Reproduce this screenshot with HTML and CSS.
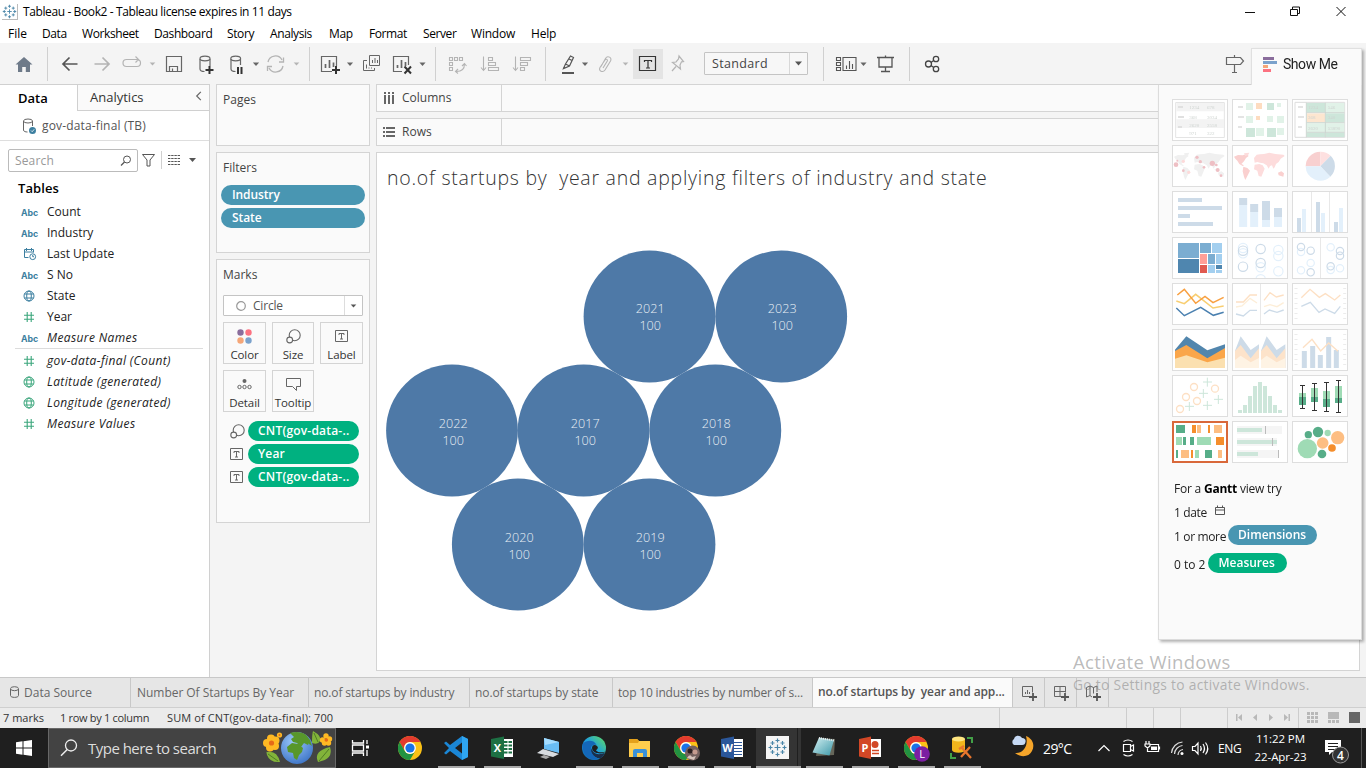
FILE: index.html
```html
<!DOCTYPE html>
<html lang="en">
<head>
<meta charset="utf-8">
<title>Tableau - Book2</title>
<link rel="stylesheet" href="styles.css">
</head>
<body>
<svg width="0" height="0" class="defs">
  <defs>
    <symbol id="caret" viewBox="0 0 8 5"><path d="M0.5 0.5h7L4 4.5z"/></symbol>
    <symbol id="hash" viewBox="0 0 12 12"><path d="M4.2 1v10M8.2 1v10M1 4.2h10M1 8.2h10" fill="none" stroke="currentColor" stroke-width="1.1"/></symbol>
    <symbol id="globe" viewBox="0 0 12 12"><g fill="none" stroke="currentColor"><circle cx="6" cy="6" r="5"/><ellipse cx="6" cy="6" rx="2.3" ry="5"/><path d="M1.5 4h9M1.5 8h9"/></g></symbol>
    <symbol id="tbox" viewBox="0 0 13 12"><path d="M.5 .5h12v11H.5zM4 5V3.5h5V5M6.500 3.500v5.500M5 9h3" fill="none" stroke="#666"/></symbol>
    <symbol id="size" viewBox="0 0 15 15"><g fill="#fafafa" stroke="#666" stroke-width="1.100"><circle cx="8.700" cy="6.300" r="5.500"/><circle cx="3.700" cy="11" r="2.900"/></g></symbol>
    <symbol id="chrome" viewBox="0 0 24 24"><circle cx="12" cy="12" r="12" fill="#fbc116"/><path d="M1.600 6A12 12 0 0 1 22.400 6H12a6 6 0 0 0-5.200 9z" fill="#e33b2e"/><path d="M1.600 6A12 12 0 0 0 12 24l5.200-9a6 6 0 0 1-10.400 0z" fill="#229342"/><circle cx="12" cy="12" r="5.900" fill="#fff"/><circle cx="12" cy="12" r="4.600" fill="#1a73e8"/></symbol>
    <symbol id="tableau" viewBox="0 0 20 20"><path d="M10 7v6M7 10h6M10 1v4M8 3h4M10 15v4M8 17h4M1 10h4M3 8v4M15 10h4M17 8v4M5 3.500v4M3 5.500h4M15 3.500v4M13 5.500h4M5 12.500v4M3 14.500h4M15 12.500v4M13 14.500h4" fill="none" stroke="#4b86a8" stroke-width="1.200"/></symbol>
  </defs>
</svg>
<div class="app">
  <header class="titlebar">
    <svg class="logo" width="16" height="16" viewBox="0 0 20 20"><use href="#tableau"/></svg>
    <span class="title">Tableau - Book2 - Tableau license expires in 11 days</span>
    <svg class="window-buttons" width="126" height="22" viewBox="1230 0 126 22"><path d="M1245 11.500h10M1290.500 8.500h7v6h-7zM1292.500 8v-2h7v6.500h-2M1336.500 6l9 9M1345.500 6l-9 9" fill="none" stroke="#111"/></svg>
  </header>
  <nav class="menu">
    <span class="m1">File</span><span class="m2">Data</span><span class="m3">Worksheet</span><span class="m4">Dashboard</span><span class="m5">Story</span><span class="m6">Analysis</span><span class="m7">Map</span><span class="m8">Format</span><span class="m9">Server</span><span class="m10">Window</span><span class="m11">Help</span>
  </nav>

  <div class="toolbar">
    <svg width="704" height="40" viewBox="0 43 704 40">
      <path d="M15.500 64.500L24 57l8.500 7.500H30V72h-4.200v-5h-3.600v5H18v-7.500z" fill="#6e7a89"/>
      <path d="M47.500 47v34M309.500 47v34M435.500 47v34M545.500 47v34" stroke="#d0d0d0"/>
      <path d="M77.500 64H63M69.500 57.500L63 64l6.500 6.500" fill="none" stroke="#555" stroke-width="1.700"/>
      <path d="M94.500 64H109M102.500 57.500L109 64l-6.500 6.500" fill="none" stroke="#b4b4b4" stroke-width="1.700"/>
      <path d="M130 59.500h-3.500a3.500 3.500 0 0 0 0 7h10.500a3.500 3.500 0 0 0 0-7h-2M127 59.500h11M135.500 56.500l3 3-3 3" fill="none" stroke="#b4b4b4" stroke-width="1.200"/>
      <g fill="none" stroke="#666" stroke-width="1.200">
        <path d="M166.500 56.500h15v15h-15zM169.500 71.500v-5h8v5M172.500 71.500v-3"/>
        <path d="M200 59v10c0 1.600 2 2.500 4.500 2.500M210 59v7"/><ellipse cx="205" cy="58.500" rx="5" ry="2.300"/>
        <path d="M231 59v10c0 1.600 2 2.500 4.500 2.500M240.500 59v6"/><ellipse cx="235.700" cy="58.500" rx="4.900" ry="2.300"/>
      </g>
      <path d="M209.500 66v8M205.500 70h8M238 67v7M241.500 67v7" stroke="#333" stroke-width="2"/>
      <g fill="none" stroke="#b4b4b4" stroke-width="1.300"><path d="M268 62a7.500 7.500 0 0 1 14-2M283 66a7.500 7.500 0 0 1-14 2M279 62h4.500v-4.500M272 66.500h-4.500V71"/></g>
      <g fill="#666"><use href="#caret" x="252" y="62" width="8" height="4.500"/><use href="#caret" x="346.500" y="62" width="7" height="4.500"/><use href="#caret" x="419" y="62" width="7" height="4.500"/><use href="#caret" x="581.500" y="62" width="7" height="4.500"/></g>
      <g fill="#b4b4b4"><use href="#caret" x="149" y="62" width="7" height="4"/><use href="#caret" x="293" y="62" width="7" height="4"/><use href="#caret" x="622" y="62" width="7" height="4"/></g>
      <path d="M332 71.500h-10.500v-15h15V66M402 71.500h-8.500v-15h15V65" fill="none" stroke="#666" stroke-width="1.200"/>
      <path d="M325.500 68v-4M329.500 68v-8M333.500 67v-4.500M397.500 68v-3M401.500 68v-8M405.500 66v-4" stroke="#666" stroke-width="1.700"/>
      <path d="M336 66v8M332 70h8" stroke="#333" stroke-width="2"/><path d="M404.500 66.500l6.500 7M411 66.500l-6.500 7" stroke="#333" stroke-width="2"/>
      <g fill="none" stroke="#666"><path d="M369.500 55.500h10v10h-10zM367 60.500h-3.500v10h11V68M372.500 63v-3M375 63v-5M377.500 63v-3M366.500 68.500v-4M369 68.500v-1M371.500 68.500v-1"/></g>
      <g fill="none" stroke="#b4b4b4" stroke-width="1.100"><path d="M449.500 57.500h3v3h-3zM454.500 57.500h3v3h-3zM459.500 57.500h3v3h-3zM449.500 62.500h3v3h-3zM449.500 67.500h3v3h-3zM464.500 64c0 5-3 7.500-8 7.500M462 66l2.500-2.500 2 2.500M458 69l-2.500 2.500 2.500 2"/>
      <path d="M483.500 56.500V70M481 67.500l2.500 3 2.500-3M488.500 57.500h4v3h-4zM488.500 62.500h7v3h-7zM488.500 67.500h10v3h-10zM515.500 56.500V70M513 67.500l2.500 3 2.500-3M520.500 57.500h10v3h-10zM520.500 62.500h7v3h-7zM520.500 67.500h4v3h-4z"/></g>
      <path d="M563.500 68.500l2-4.500 5-8 3 1.500-4 8.500zM565.500 64l4 2M569 59l3 1.500" fill="none" stroke="#555" stroke-width="1.200"/><path d="M562 73h12" stroke="#555" stroke-width="2"/>
      <path d="M601 66.500l4.500-8c2-3.500 7-1 5 2.500l-5.500 9c-2 3-7 1-5-2.500l5-7.500c1-1.500 3-.5 2.300 1l-4.300 7" fill="none" stroke="#b4b4b4" stroke-width="1.100"/>
      <rect x="633" y="49" width="30" height="30" fill="#e4e4e4"/>
      <path d="M639.500 56.500h16v14h-16zM644.500 62v-1.500h7V62M648 60.500v7.500M646 68h4" fill="none" stroke="#333" stroke-width="1.200"/>
      <path d="M679 56l4.500 5.500-2 .3-1.500 3.200.5 4-8-6.500 3.500-.5 2.500-3zM676 66.500l-4 4.500" fill="none" stroke="#b4b4b4" stroke-width="1.200"/>
    </svg>
    <div class="fit"><span>Standard</span><i><svg width="9" height="5"><use href="#caret" width="9" height="5"/></svg></i></div>
    <svg width="444" height="40" viewBox="807 43 444 40">
      <path d="M823.500 47v34M909.500 47v34" stroke="#d0d0d0"/>
      <g fill="none" stroke="#555" stroke-width="1.100"><path d="M836.500 57.500h4v3h-4zM836.500 62.500h4v3h-4zM836.500 67.500h4v3h-4zM843 57.500h13v13h-13zM846.500 69v-3.500M849.500 69v-8M852.500 69v-5"/></g>
      <use href="#caret" x="860" y="62" width="7" height="4.500" fill="#666"/>
      <path d="M877 57.500h17M879 58v9h13v-9M885.500 55.500v2M885.500 67v4M881 71.500h9" fill="none" stroke="#555" stroke-width="1.300"/>
      <g fill="none" stroke="#444" stroke-width="1.300"><circle cx="928.500" cy="64" r="3"/><circle cx="936" cy="59" r="2.700"/><circle cx="936" cy="69" r="2.700"/><path d="M931 62.500l2.700-2M931 65.500l2.700 2"/></g>
      <path d="M1226.500 57.500h14l3 3.500-3 3.500h-14zM1234.500 55v2.500M1234.500 65v7.500M1232 72.500h5" fill="none" stroke="#666" stroke-width="1.200"/>
    </svg>
  </div>

  <main class="work">
    <aside class="data-pane">
      <div class="pane-tabs"><b>Data</b><span class="an">Analytics</span><svg width="8" height="12" viewBox="0 0 8 12"><path d="M6 1L1.500 5.500 6 10" fill="none" stroke="#666" stroke-width="1.300"/></svg></div>
      <div class="source">
        <svg width="15" height="16" viewBox="22 117 15 16"><path d="M23.500 120v9c0 1.500 2 2 4 2M32.500 120v5" fill="none" stroke="#666"/><ellipse cx="28" cy="120" rx="4.500" ry="2" fill="none" stroke="#666"/><circle cx="32.500" cy="129.500" r="3.500" fill="#3c7fa0"/><path d="M31 129.500l1.200 1.200 2-2.400" fill="none" stroke="#fff" stroke-width=".8"/></svg>
        <span>gov-data-final (TB)</span>
      </div>
      <div class="search-row">
        <div class="search"><span>Search</span><svg width="12" height="12" viewBox="0 0 12 12"><circle cx="7" cy="4.500" r="3.500" fill="none" stroke="#555"/><path d="M4.500 7L1 10.500" stroke="#555" stroke-width="1.200"/></svg></div>
        <svg width="60" height="20" viewBox="141 151 60 20"><path d="M142.500 154.500h12l-4.500 5.500v6h-3v-6z" fill="none" stroke="#555"/><path d="M161.500 151v18" stroke="#d0d0d0"/><path d="M168 155.500h12M168 158.500h12M168 161.500h12M168 164.500h12" stroke="#555" stroke-dasharray="2.400 .8"/><path d="M189 158h7l-3.500 4z" fill="#555"/></svg>
      </div>
      <h3>Tables</h3>
      <ul class="fields">
        <li><i class="abc">Abc</i><span>Count</span></li>
        <li><i class="abc">Abc</i><span>Industry</span></li>
        <li><i class="ico"><svg width="14" height="14" viewBox="0 0 14 14" fill="none" stroke="currentColor"><path d="M5.500 10.500h-4v-8h9v3M1.500 5h9M3.500 1v3M8.500 1v3"/><circle cx="9.700" cy="9.700" r="2.900"/><path d="M9.700 8v1.700h1.300"/></svg></i><span>Last Update</span></li>
        <li><i class="abc">Abc</i><span>S No</span></li>
        <li><i class="ico"><svg width="12" height="12"><use href="#globe"/></svg></i><span>State</span></li>
        <li class="g"><i class="ico"><svg width="12" height="12"><use href="#hash"/></svg></i><span>Year</span></li>
        <li><i class="abc">Abc</i><em>Measure Names</em></li>
      </ul>
      <ul class="fields measures">
        <li class="g"><i class="ico"><svg width="12" height="12"><use href="#hash"/></svg></i><em>gov-data-final (Count)</em></li>
        <li class="g"><i class="ico"><svg width="12" height="12"><use href="#globe"/></svg></i><em>Latitude (generated)</em></li>
        <li class="g"><i class="ico"><svg width="12" height="12"><use href="#globe"/></svg></i><em>Longitude (generated)</em></li>
        <li class="g"><i class="ico"><svg width="12" height="12"><use href="#hash"/></svg></i><em>Measure Values</em></li>
      </ul>
    </aside>

    <section class="cards">
      <div class="card pages"><h4>Pages</h4></div>
      <div class="card filters"><h4>Filters</h4><div class="pill blue">Industry</div><div class="pill blue">State</div></div>
      <div class="card marks"><h4>Marks</h4>
        <div class="mark-type"><svg width="10" height="10"><circle cx="5" cy="5" r="4.300" fill="none" stroke="#999" stroke-width="1.200"/></svg><span>Circle</span><i><svg width="7" height="4"><use href="#caret" width="7" height="4"/></svg></i></div>
        <div class="mark-grid">
          <div><svg width="15" height="15"><circle cx="3.500" cy="3.500" r="3.200" fill="#8a6d9c"/><circle cx="11.500" cy="3.500" r="3.200" fill="#fc7281"/><circle cx="3.500" cy="11.500" r="3.200" fill="#f5a678"/><circle cx="11.500" cy="11.500" r="3.200" fill="#7ba2cc"/></svg><span>Color</span></div>
          <div><svg width="15" height="15"><use href="#size"/></svg><span>Size</span></div>
          <div><svg width="13" height="15" viewBox="0 0 13 15"><use href="#tbox" y="1" width="13" height="12"/></svg><span>Label</span></div>
          <div><svg width="15" height="15"><circle cx="7.500" cy="4" r="2" fill="#666"/><g fill="none" stroke="#666"><circle cx="2.500" cy="10" r="1.700"/><circle cx="7.500" cy="10" r="1.700"/><circle cx="12.500" cy="10" r="1.700"/></g></svg><span>Detail</span></div>
          <div><svg width="15" height="15"><path d="M.5 1.500h14v8h-4v4l-4-4h-6z" fill="none" stroke="#666"/></svg><span>Tooltip</span></div>
        </div>
        <div class="enc"><svg width="15" height="15"><use href="#size"/></svg><div class="pill green">CNT(gov-data-..</div></div>
        <div class="enc"><svg width="13" height="12"><use href="#tbox"/></svg><div class="pill green">Year</div></div>
        <div class="enc"><svg width="13" height="12"><use href="#tbox"/></svg><div class="pill green">CNT(gov-data-..</div></div>
      </div>
    </section>

    <section class="view">
      <div class="shelf"><div><svg width="12" height="12"><path d="M2 0v2M6 0v2M10 0v2M2 3v9M6 3v9M10 3v9" stroke="#666" stroke-width="2"/></svg><span>Columns</span></div></div>
      <div class="shelf"><div><svg width="12" height="12"><path d="M0 2h2M0 6h2M0 10h2M3 2h9M3 6h9M3 10h9" stroke="#666" stroke-width="2"/></svg><span>Rows</span></div></div>
      <div class="sheet">
        <h1>no.of startups by&nbsp; year and applying filters of industry and state</h1>
        <svg class="bubbles" width="480" height="370" viewBox="377 246 480 370">
          <g fill="#4e79a7"><circle cx="649.500" cy="316.500" r="65.900"/><circle cx="781.200" cy="316.500" r="65.900"/><circle cx="452" cy="430.500" r="65.900"/><circle cx="583.600" cy="430.500" r="65.900"/><circle cx="715.300" cy="430.500" r="65.900"/><circle cx="517.800" cy="544.500" r="65.900"/><circle cx="649.500" cy="544.500" r="65.900"/></g>
          <g class="labels">
            <text x="650.200" y="313">2021</text><text x="650.200" y="330">100</text>
            <text x="782.200" y="313">2023</text><text x="782.200" y="330">100</text>
            <text x="453.200" y="428">2022</text><text x="453.200" y="445">100</text>
            <text x="585.200" y="428">2017</text><text x="585.200" y="445">100</text>
            <text x="716.200" y="428">2018</text><text x="716.200" y="445">100</text>
            <text x="519.200" y="542">2020</text><text x="519.200" y="559">100</text>
            <text x="650.200" y="542">2019</text><text x="650.200" y="559">100</text>
          </g>
        </svg>
      </div>
    </section>
  </main>

  <nav class="tabs">
    <div class="t1"><svg width="9" height="12"><path d="M.5 3v6.500c0 2.500 8 2.500 8 0V3" fill="none" stroke="#666"/><ellipse cx="4.500" cy="2.700" rx="4" ry="2" fill="none" stroke="#666"/></svg><span>Data Source</span></div>
    <div class="t2"><span>Number Of Startups By Year</span></div>
    <div class="t3"><span>no.of startups by industry</span></div>
    <div class="t4"><span>no.of startups by state</span></div>
    <div class="t5"><span>top 10 industries by number of s...</span></div>
    <div class="t6"><span>no.of startups by&nbsp; year and app...</span></div>
    <div class="add"><svg width="31" height="29" viewBox="1013 678 31 29"><path d="M1031 696.500h-8.500v-10h10v6M1025.500 694v-2M1027.500 694v-4M1029.500 694v-2" fill="none" stroke="#666"/><path d="M1033 693v8M1029 697h8" stroke="#555" stroke-width="1.800"/></svg></div>
    <div class="add"><svg width="31" height="29" viewBox="1045 678 31 29"><path d="M1061 696.500h-6.500v-10h11v6M1060 687v10M1055 691.500h11" fill="none" stroke="#666"/><path d="M1065 693v8M1061 697h8" stroke="#555" stroke-width="1.800"/></svg></div>
    <div class="add"><svg width="31" height="29" viewBox="1077 678 31 29"><path d="M1092 697l-2-1.500-3.500 1.500v-9.500l3.500-1.500 3.500 1.500 3.500-1.500v6M1090 686v9.500M1093.500 687.500v6" fill="none" stroke="#666"/><path d="M1097 693v8M1093 697h8" stroke="#555" stroke-width="1.800"/></svg></div>
    <div class="rest"></div>
  </nav>

  <footer class="status">
    <span class="s1">7 marks</span><span class="s2">1 row by 1 column</span><span class="s3">SUM of CNT(gov-data-final): 700</span>
    <svg width="367" height="20" viewBox="999 708 367 20"><path d="M999.500 708v20M1126.500 708v20M1153.500 708v20M1180.500 708v20M1227.500 708v20M1298.500 708v20" stroke="#cdcdcd"/>
      <g fill="#b8b8b8"><path d="M1236 714h1.500v7h-1.500zM1242 714v7l-4-3.500zM1257 714v7l-4-3.500zM1269 714v7l4-3.500zM1284 714v7l4-3.500zM1288.500 714h1.500v7h-1.500z"/></g>
      <path d="M1307 713.500h11M1307 717.500h11M1307 721.500h11" stroke="#b8b8b8" stroke-width="3" stroke-dasharray="3 1"/><path d="M1328 712h11v7h-11z" fill="#b8b8b8"/><path d="M1328 721.500h11" stroke="#b8b8b8" stroke-width="3" stroke-dasharray="3 1"/><path d="M1349 712h11v11h-11z" fill="#666"/></svg>
  </footer>

  <div class="taskbar">
    <svg width="48" height="40" viewBox="0 728 48 40"><path d="M16 742.300l6.500-1v6.200H16zM23.500 741.200l8.500-1.200v7.500h-8.500zM16 748.500h6.500v6.200l-6.500-1zM23.500 748.500h8.500v7.500l-8.500-1.200z" fill="#fff"/></svg>
    <div class="tb-search">
      <svg width="18" height="18" viewBox="0 0 18 18"><circle cx="11" cy="6.500" r="5.500" fill="none" stroke="#eee" stroke-width="1.300"/><path d="M7.200 10.500L1 16.700" stroke="#eee" stroke-width="1.500"/></svg>
      <span>Type here to search</span>
      <svg class="earth" width="74" height="38" viewBox="260 729 74 38">
        <defs><radialGradient id="sea" cx=".4" cy=".3" r=".75"><stop offset="0" stop-color="#9cc9fb"/><stop offset="1" stop-color="#3d74c6"/></radialGradient></defs>
        <path d="M266 755q-1-4 0-3 10-2 13 10-10 1-13-7zM311 743q0-9 1-12 9 5 7 10-2 4-8 2zM317 762q-5-11 12-15 4 12-12 15z" fill="#82b33a"/><path d="M267 754l10 7M313 733l4 9M318 761l10-12" stroke="#426e20" stroke-width=".8"/>
        <circle cx="296" cy="748" r="16" fill="url(#sea)"/>
        <path d="M289 733c6-2 14-1 17 3l3 4-2 5-4-2-3 4-4-4-4-1-2-3 3-2zM286 747l5-4 6 1 5 4-1 4-3 3-2 5-3-2-1-5-5-1zM305 735l4 5 2 6-3-2z" fill="#58972b"/>
        <g fill="#ffb923"><circle cx="270" cy="738.500" r="4"/><circle cx="266" cy="743" r="4"/><circle cx="269" cy="747.500" r="4"/><circle cx="274" cy="746" r="4"/><circle cx="274.500" cy="740.500" r="4"/><circle cx="325" cy="736" r="2.700"/><circle cx="321.500" cy="740" r="2.700"/><circle cx="323.500" cy="743" r="2.700"/><circle cx="327.500" cy="743" r="2.700"/><circle cx="328.500" cy="739" r="2.700"/><circle cx="278.500" cy="735" r="2.600"/></g>
        <g fill="#e66a18"><circle cx="270.500" cy="743" r="2.600"/><circle cx="325.300" cy="740" r="1.800"/><circle cx="278.500" cy="735" r="1"/></g>
      </svg>
    </div>
    <svg width="704" height="40" viewBox="336 728 704 40">
      <defs><linearGradient id="edge" x1="0" y1="1" x2="1" y2="0"><stop offset="0" stop-color="#0c59a4"/><stop offset=".5" stop-color="#1e9fe0"/><stop offset="1" stop-color="#63e05a"/></linearGradient><linearGradient id="paper" x1="0" y1="0" x2="1" y2="1"><stop offset="0" stop-color="#d5f1f3"/><stop offset="1" stop-color="#3c98a8"/></linearGradient></defs>
      <path d="M352.500 740v3h11v-3M352.500 745h11v6h-11zM352.500 756v-3h11v3M367 740v4M367 750v6" fill="none" stroke="#fff" stroke-width="1.300"/><path d="M366 745.500h3v3h-3z" fill="#fff"/>
      <use href="#chrome" x="398" y="736" width="24" height="24"/>
      <path d="M462 736l6 3v18l-6 3-12-9-4 3.500-2-1.500 5-5-5-5 2-1.500 4 3.500zM462 742.500l-7 5.500 7 5.500z" fill="#1b87d6" fill-rule="evenodd"/><path d="M462 736l6 3v18l-6 3z" fill="#2fa5f0"/>
      <path d="M502 739h11v18h-11z" fill="#fff"/><path d="M504 742h3.500M508.500 742h3.500M504 745.500h3.500M508.500 745.500h3.500M504 749h3.500M508.500 749h3.500M504 752.500h3.500M508.500 752.500h3.500" stroke="#1d7044" stroke-width="2"/><path d="M491 739l13-2.500v22.500l-13-2.500z" fill="#1d7044"/>
      <path d="M544 738l15 4v11l-15-4z" fill="#69bdf5"/><path d="M544 738l15 4-14 3z" fill="#a4dcff"/><path d="M537 753l6-4 16 5-6 3z" fill="#d8dce0"/><path d="M540 757l4-2 6 2-4 2z" fill="#aaa"/>
      <circle cx="594" cy="748" r="12" fill="url(#edge)"/><path d="M592 748c0 6 7 8 13 4.500-1 3-3 5-5 6-7-1-11-6-8-10.500z" fill="#1b2f4a"/><path d="M582.500 744c5-5 12-4 14 1-4-1-6 2-5.500 5 .5 4 4 7.500 8 9-9 3-17-4-16.500-15z" fill="#1467b8"/><path d="M592 748c0-3 3-4 5-2s0 3-1 4.500c2 2 6 2.500 9.500 1-2 3-13 3-13.500-3.500z" fill="#1f1f1f"/>
      <path d="M629 739h8l2 2h11v16h-21z" fill="#ffcd4d"/><path d="M629 739h8l2 2-1 2h-9z" fill="#e4a11b"/><path d="M633 757v-6q0-2 2-2h10q2 0 2 2v6h-4v-4h-6v4z" fill="#3b91d8"/>
      <use href="#chrome" x="674" y="736" width="24" height="24"/><circle cx="692.500" cy="753" r="7.500" fill="#74605e"/><circle cx="690" cy="751" r="2.500" fill="#2c2021"/><circle cx="695" cy="752" r="2.500" fill="#c59b8f"/><path d="M687 758q3-5 5-1l4-1-2 4z" fill="#d6c4bc"/>
      <path d="M732 739h11v18h-11z" fill="#fff"/><path d="M734 742.500h8M734 745.500h8M734 748.500h8M734 751.500h8M734 754.500h8" stroke="#2b579a"/><path d="M721 739l13-2.500v22.500l-13-2.500z" fill="#2b579a"/>
      <path d="M756 728h41v40h-41z" fill="#343434"/><path d="M798 728h3v40h-3z" fill="#343434"/><path d="M766 736h23v23h-23z" fill="#f5f5f5"/><use href="#tableau" x="767.500" y="737.500" width="20" height="20"/>
      <path d="M819 738l16 1-1 16-18 1z" fill="#66665a"/><path d="M819 737.500l15 2.500-4.500 15.500-17-3z" fill="url(#paper)"/><path d="M819 738l15 2.500" stroke="#eee" stroke-width="2" stroke-dasharray="1 1"/>
      <path d="M869 739h12v18h-12z" fill="#fff"/><circle cx="875" cy="744.500" r="3.500" fill="#d24726"/><path d="M872 750.500h7M872 753.500h7" stroke="#d24726" stroke-width="1.500"/><path d="M859 739l12-2.500v22.500l-12-2.500z" fill="#d24726"/>
      <use href="#chrome" x="904" y="736" width="24" height="24"/><circle cx="922" cy="754" r="7.800" fill="#7b1fa2"/>
      <path d="M952 739v11a6 2.500 0 0 0 13 0v-11z" fill="#f2b51c"/><ellipse cx="958.500" cy="739" rx="6.500" ry="2.500" fill="#ffe680"/><path d="M967 738h5v5M951 753v5h5" fill="none" stroke="#43a047" stroke-width="2"/><path d="M961 757l9-10M962 748l9 10M959 749l5-3" stroke="#e8762c" stroke-width="2.300"/>
      <g class="glyphs"><text x="497.500" y="752">X</text><text x="727.500" y="752">W</text><text x="865" y="752">P</text><text class="thin" x="922" y="758">L</text></g>
      <path d="M438 767h37M484 767h37M576 767h37M622 767h37M668 767h37M714 767h37M756 767h45M806 767h37M852 767h37M898 767h37M944 767h37" stroke="#a9a9a9" stroke-width="2"/>
      <path d="M1026 736c7 3 9 9 6 15s-11 7-17 2c7 1 14-6 11-17z" fill="#f5a52a"/><path d="M1014 745a3.500 3.500 0 0 1 0-6c1-4 6-4 8-1 3 0 4 2 3.500 4s-1 3-3.500 3z" fill="#c6d9f4"/>
    </svg>
    <span class="temp">29°C</span>
    <svg width="130" height="40" viewBox="1085 728 130 40">
      <g fill="none" stroke="#fff" stroke-width="1.200"><path d="M1098.500 751l5.500-5.500 5.500 5.500"/><path d="M1123.500 744.500h7v7h-7zM1130.500 746.500l3-1.500v6l-3-1.500M1123.500 741.500c3-2 6-2 9 0M1123.500 754.500c3 2 6 2 9 0"/><path d="M1149.500 744.500h9v7h-11M1146 741v3M1149 741v3M1145 744h5v2l-2.500 2-2.500-2zM1147.500 748v4M1159.500 746.500v3"/>
      <path d="M1171.500 753a12 12 0 0 1 11-11M1174.500 754a9 9 0 0 1 8-8.500M1178 755a6 6 0 0 1 5-5.500" stroke="#ddd"/><path d="M1192.500 746.500h2.500l3-3.500v11l-3-3.500h-2.500zM1200.500 746q1.500 2.500 0 5M1203 744q3 4.500 0 9M1205.500 742.500q4.500 6 0 12"/></g><path d="M1151 746.500h6v3.500h-6z" fill="#fff"/><circle cx="1182" cy="753.500" r="1.500" fill="#fff"/>
    </svg>
    <span class="lang">ENG</span>
    <div class="clock"><span class="time">11:22 PM</span><span class="date">22-Apr-23</span></div>
    <svg class="notes" width="55" height="40" viewBox="1311 728 55 40"><path d="M1325 740h16v12h-9l-3 3v-3h-4z" fill="#fff"/><path d="M1328 743.500h10M1328 746.500h10M1328 749.500h7" stroke="#1f1f1f" stroke-width="1.200"/><circle cx="1340.500" cy="755" r="8" fill="#333" stroke="#999"/><text x="1340.500" y="760">4</text><path d="M1361.500 728v40" stroke="#555"/></svg>
  </div>

  <aside class="showme">
    <div class="showme-tab"><svg width="15" height="15"><path d="M0 0h11v3H0z" fill="#8a6d9c"/><path d="M0 4h14v3H0z" fill="#7ba2cc"/><path d="M0 8h5v3H0z" fill="#f5a678"/><path d="M0 12h8v3H0z" fill="#fc7281"/></svg><span>Show Me</span></div>
    <div class="showme-body">
      <div class="thumbs">
        <svg viewBox="69 180 162 120"><path d="M77 187.500h146v105H77z" fill="#fff" stroke="#e4e4e4" stroke-width="3"/><path d="M79 189h143v25H79zM79 238h143v26H79z" fill="#f3f3f3"/><path d="M84 201h15M84 231h18M84 261h12" stroke="#e0e0e0" stroke-width="6"/><g class="nums"><text x="118" y="208">1234</text><text x="171" y="208">678</text><text x="118" y="236">368</text><text x="171" y="236">3034</text><text x="118" y="262">2620</text><text x="171" y="262">2558</text><text x="118" y="286">971</text><text x="171" y="286">322</text></g></svg>
        <svg viewBox="249 180 162 120"><path d="M264 201h15M264 231h18M264 261h12" stroke="#e4e4e4" stroke-width="6"/><path d="M288 189h21v21h-21zM288 228h21v21h-21zM318 264h24v24h-24zM381 189h12v12h-12zM351 228h18v18h-18zM381 228h21v21h-21zM381 264h21v21h-21z" fill="#e1f2e8"/><path d="M288 264h27v27h-27zM351 189h21v21h-21zM351 264h27v27h-27z" fill="#cde6da"/><path d="M318 189h18v18h-18zM318 228h12v12h-12z" fill="#fddcc0"/></svg>
        <svg viewBox="429 180 162 120"><path d="M435 187h149v105H435z" fill="#fff" stroke="#ddd" stroke-width="3"/><path d="M470 189h55v27h-55zM527 220h56v26h-56zM470 279h55v12h-55zM527 279h56v12h-56z" fill="#cde6da"/><path d="M527 189h56v27h-56zM470 250h113v26H470z" fill="#e1f2e8"/><path d="M470 220h55v26h-55z" fill="#fde6d0"/><path d="M469 188v104M526 188v104M470 218h113M470 248h113M470 277h113" stroke="#ccd6d0" stroke-width="3"/><path d="M444 201h15M444 231h18M444 261h12" stroke="#e4e4e4" stroke-width="6"/><g class="nums"><text x="474" y="207">1234</text><text x="533" y="207">546</text><text x="474" y="238">368</text><text x="533" y="238">340</text><text x="474" y="269">2620</text><text x="533" y="269">53890</text></g></svg>
        <svg viewBox="69 318 162 120"><path d="M72 350l12-5 14 1 12-4 6 6-8 6-6 10-8 8 8 4-4 2-10-6-6-10-6-6zM102 340l16-2-4 8-8 2zM100 380l12 4 8 8-6 12-8 16-4-10-4-16zM132 354l8-10 10-1 12-1 16-4 18 4 24 2 4 4-12 8-6 10-8 6-4 10-4 4-4-10-6 2-4 8-6-10-10-6-10-2-8-2-8 2zM134 374l14-2 10 4 6 10-4 10-6 14-8-2-4-16-10-4zM204 398l10-4 8 6-2 10-14-4zM192 386l10 4 6 4-10-2z" fill="#f0f0f0"/><g fill="#eebfc4"><circle cx="78" cy="374" r="7"/><circle cx="187" cy="370" r="8"/><circle cx="141" cy="352" r="5"/><circle cx="151" cy="365" r="5"/><circle cx="203" cy="390" r="6"/><circle cx="100" cy="392" r="4"/><circle cx="116" cy="397" r="5" fill="#fddada"/><circle cx="100" cy="364" r="5" fill="#fddada"/><circle cx="162" cy="382" r="4"/><circle cx="213" cy="407" r="4"/><circle cx="199" cy="375" r="4"/><circle cx="82" cy="362" r="3"/></g></svg>
        <svg viewBox="249 318 162 120"><path d="M252 350l12-5 14 1 12-4 6 6-8 6-6 10-8 8 8 4-4 2-10-6-6-10-6-6zM280 380l12 4 8 8-6 12-8 16-4-10-4-16zM384 398l10-4 8 6-2 10-14-4z" fill="#fad0cf"/><path d="M312 354l8-10 10-1 12-1 16-4 18 4 24 2 4 4-12 8-6 10-8 6-4 10-4 4-4-10-6 2-4 8-6-10-10-6-10-2-8-2-8 2zM314 374l14-2 10 4 6 10-4 10-6 14-8-2-4-16-10-4zM282 340l16-2-4 8-8 2z" fill="#fddcdc"/></svg>
        <svg viewBox="429 318 162 120"><path d="M511 379V335A44 44 0 0 0 467 379z" fill="#f8d0d0"/><path d="M511 379V335A44 44 0 0 1 542 347z" fill="#fee0e0"/><path d="M511 379L542 347A44 44 0 0 1 541 410z" fill="#cddbe8"/><path d="M511 379L541 410A44 44 0 0 1 467 379z" fill="#e3f0fb"/></svg>
        <svg viewBox="69 456 162 120"><path d="M84 480h72M84 504h132M84 528h36M84 552h105" stroke="#cddbe8" stroke-width="12"/></svg>
        <svg viewBox="249 456 162 120"><path d="M279.500 495v66M312.500 516v45M348 540v21M384 531v30" stroke="#e3f0fb" stroke-width="24"/><path d="M279.500 474v21M312.500 492v24M348 483v57M384 504v27" stroke="#cddbe8" stroke-width="24"/></svg>
        <svg viewBox="429 456 162 120"><path d="M484.500 456v120M538.500 456v120" stroke="#e8e8e8" stroke-width="3"/><path d="M447 534v42M504 486v90M558 546v30" stroke="#cddbe8" stroke-width="12"/><path d="M462 507v69M519 519v57M573 504v72" stroke="#e3f0fb" stroke-width="12"/></svg>
        <svg viewBox="69 594 162 120"><path d="M84 609h63v45H84zM150 609h33v30h-33zM174 642h21v30h-21z" fill="#7badd1"/><path d="M84 657h63v42H84zM198 675h18v12h-18z" fill="#4f86af"/><path d="M186 609h30v30h-30zM198 642h18v30h-18zM174 675h21v24h-21zM198 690h18v9h-18z" fill="#a3cfef"/><path d="M150 642h21v30h-21z" fill="#ff9f98"/><path d="M150 675h21v24h-21z" fill="#e05a50"/></svg>
        <svg viewBox="249 594 162 120"><g fill="none" stroke="#e3f0fb" stroke-width="3.600"><circle cx="279" cy="624" r="14"/><circle cx="279" cy="640" r="14"/><circle cx="385" cy="630" r="14"/><circle cx="385" cy="648" r="14"/><circle cx="385" cy="694" r="14"/><circle cx="332" cy="682" r="14"/><circle cx="332" cy="718" r="14"/><g stroke="#cddbe8"><circle cx="279" cy="632" r="14"/><circle cx="279" cy="680" r="14"/><circle cx="332" cy="627" r="14"/><circle cx="332" cy="669" r="14"/></g></g></svg>
        <svg viewBox="429 594 162 120"><path d="M511.500 594v120" stroke="#e8e8e8" stroke-width="3"/><g fill="none" stroke="#e3f0fb" stroke-width="3.600"><circle cx="453" cy="636" r="11"/><circle cx="482" cy="669" r="11"/><circle cx="453" cy="691" r="11"/><circle cx="542" cy="622" r="11"/><circle cx="542" cy="690" r="11"/><circle cx="570" cy="685" r="11"/><g stroke="#cddbe8"><circle cx="453" cy="621" r="11"/><circle cx="482" cy="632" r="11"/><circle cx="482" cy="697" r="11"/><circle cx="542" cy="679" r="11"/><circle cx="570" cy="633" r="11"/><circle cx="570" cy="647" r="11"/></g></g></svg>
        <svg viewBox="69 12 162 120"><g fill="none" stroke-width="4.500"><path d="M79 63l24 8 34-28 52 41 32-6" stroke="#f8ce71"/><path d="M82 45l21-17 34 42 28-21 24 19 32-16" stroke="#f8a041"/><path d="M79 84l24 23 49-25 38 24 31-9" stroke="#4a80b0"/></g></svg>
        <svg viewBox="249 12 162 120"><path d="M331.500 12v120" stroke="#e8e8e8" stroke-width="3"/><g fill="none" stroke-width="4"><path d="M258 66l22 0 20-21h21M342 61l18-23 19 13 22-6" stroke="#fde0c4"/><path d="M258 81l18-3 24-23 21 14M342 80l18-6 21 6 20-12" stroke="#fdeed8"/><path d="M258 102l22 6 20-17h21M342 102l16-12 23 7 20-7" stroke="#cddbe8"/></g></svg>
        <svg viewBox="429 12 162 120"><path d="M438 24v96M584 24v104" stroke="#ececec" stroke-width="9" stroke-dasharray="3 12"/><g fill="none" stroke-width="4"><path d="M454 53l26-25 28 24 18-11 28 19 17-15" stroke="#fde0c4"/><path d="M454 79l27-12 26 30 18-10 29 13 17-21" stroke="#cddbe8"/></g></svg>
        <svg viewBox="69 150 162 120"><path d="M75 209l34-40 63 42 53-18v71H75z" fill="#5286ad"/><path d="M75 213l34-18 63 40 53-31v60H75z" fill="#faa64a"/><path d="M75 236l34-10 63 21 53-14v31H75z" fill="#fbe0b0"/></svg>
        <svg viewBox="249 150 162 120"><path d="M255 212l17-43 30 41 25-17v71h-72zM333 212l17-43 30 41 26-17v71h-73z" fill="#cddbe8"/><path d="M255 213l17-18 30 40 25-30v59h-72zM333 213l17-18 30 40 26-30v59h-73z" fill="#fde3ca"/><path d="M255 240l17-13 30 20 25-13v30h-72zM333 240l17-13 30 20 26-13v30h-73z" fill="#fef3e4"/></svg>
        <svg viewBox="429 150 162 120"><path d="M438 162v96M584 162v104" stroke="#ececec" stroke-width="9" stroke-dasharray="3 12"/><path d="M463 213v51M488 198v66M511 225v39M536 171v93M559 210v54" stroke="#cddbe8" stroke-width="15"/><path d="M459 203l27-25 26 35 24-24 28 25" fill="none" stroke="#fde0c4" stroke-width="4"/></svg>
        <svg viewBox="69 288 162 120"><g fill="none" stroke="#fde0c4" stroke-width="4"><circle cx="132" cy="321" r="10.500"/><circle cx="195" cy="326" r="10.500"/><circle cx="108" cy="351" r="10.500"/><circle cx="141" cy="363" r="10.500"/><circle cx="90" cy="387" r="10.500"/></g><path d="M172 293v27M159 306h27M160 327v27M147 340h27M205 345v27M192 358h27M172 363v27M159 376h27M118 366v27M105 379h27" stroke="#cde6da" stroke-width="3"/></svg>
        <svg viewBox="249 288 162 120"><path d="M270 390v9M285 375v24M300 348v51M315 318v81M330 306v93M345 318v81M360 348v51M375 375v24M390 390v9" stroke="#cde6da" stroke-width="12"/></svg>
        <svg viewBox="429 288 162 120"><path d="M457.500 339v12M493.500 324v27M529.500 333v24M565.500 318v36" stroke="#9fdbb5" stroke-width="21"/><path d="M457.500 351v24M493.500 351v15M529.500 357v24M565.500 354v15" stroke="#57ad88" stroke-width="21"/><path d="M457.500 316v69M450 316.500h15M450 385.500h15M493.500 310v81M486 310.500h15M486 391.500h15M529.500 307v87M522 307.500h15M522 394.500h15M565.500 301v96M558 301.500h15M558 397.500h15" stroke="#333" stroke-width="3"/></svg>
        <svg class="selected" viewBox="72 429 156 114"><g fill="#57ad88"><path d="M78 435h27v24H78zM99 471h9v24h-9zM120 471h12v24h-12zM78 510h6v24h-6zM165 510h21v24h-21z"/></g><g fill="#9fdbb5"><path d="M78 471h18v24H78zM141 471h42v24h-42zM135 510h12v24h-12z"/></g><g fill="#f58e2c"><path d="M126 435h12v24h-12zM174 435h6v24h-6zM198 471h24v24h-24zM123 510h6v24h-6z"/></g><g fill="#fdbe82"><path d="M141 435h12v24h-12zM192 435h24v24h-24zM93 510h24v24H93zM204 510h12v24h-12z"/></g></svg>
        <svg viewBox="249 426 162 120"><path d="M261 450h135M261 486h120M261 522h125" stroke="#f5f5f5" stroke-width="24"/><path d="M261 450h75M261 486h120M261 522h63" stroke="#cde6da" stroke-width="12"/><path d="M346.500 438v24M367.500 474v24M385.500 510v24" stroke="#bbb" stroke-width="3"/></svg>
        <svg viewBox="429 426 162 120"><g fill="#57ad88"><circle cx="504" cy="456" r="15.500"/><circle cx="475" cy="464" r="11"/><circle cx="516" cy="522" r="13"/></g><g fill="#9fdbb5"><circle cx="472" cy="506" r="29"/><circle cx="533" cy="459" r="9.500"/></g><g fill="#fdbe82"><circle cx="563" cy="473" r="20"/><circle cx="518" cy="489" r="17.500"/></g><circle cx="546" cy="504" r="11.500" fill="#f58e2c"/></svg>
      </div>
      <p class="p1">For a <b>Gantt</b> view try</p>
      <p class="p2"><span>1 date</span><svg width="10" height="11"><path d="M.5 2.500h9v7h-9zM.5 5h9M2.500 .5v2M7.500 .5v2" fill="none" stroke="#555"/></svg></p>
      <p class="p3"><span>1 or more</span><span class="pill blue">Dimensions</span></p>
      <p class="p4"><span>0 to 2</span><span class="pill green">Measures</span></p>
    </div>
  </aside>
  <div class="watermark"><span class="w1">Activate Windows</span><span class="w2">Go to Settings to activate Windows.</span></div>
</div>
</body>
</html>
```
FILE: styles.css
```css
* { box-sizing: border-box; }
body { margin: 0; font: 12px "Open Sans", "Noto Sans", sans-serif; color: #333; }
ul, h1, h3, h4, p { margin: 0; padding: 0; list-style: none; font-weight: normal; }
i { font-style: normal; }
svg { display: block; flex: none; }
span, b, em { white-space: pre; }
.defs { position: absolute; }
.app { position: relative; width: 1366px; height: 768px; overflow: hidden; display: flex; flex-direction: column; background: #f4f4f4; }

.titlebar { height: 24px; background: #fff; display: flex; align-items: center; padding: 0 10px 0 2px; color: #000; }
.logo { border-right: 1px solid #bbb; border-bottom: 1px solid #bbb; }
.title { margin-left: 5px; flex: 1; letter-spacing: -.39px; padding-bottom: 1px; }
.menu { height: 19px; background: #fff; color: #000; display: flex; align-items: center; padding-left: 8px; letter-spacing: -.4px; }
.m1 { width: 34px; letter-spacing: 0; } .m2 { width: 40px; } .m3 { width: 72px; } .m4 { width: 73px; } .m5 { width: 43px; } .m6 { width: 59px; } .m7 { width: 40px; } .m8 { width: 54px; } .m9 { width: 48px; } .m10 { width: 60px; letter-spacing: -.2px; } .m11 { letter-spacing: -.2px; }

.toolbar { height: 41px; flex: none; background: #f4f4f4; display: flex; }
.fit { width: 104px; margin-right: -1px; height: 23px; margin-top: 9px; border: 1px solid #c4c4c4; border-radius: 1px; background: #f7f7f7; display: flex; align-items: center; font-size: 12.5px; color: #444; }
.fit span { flex: 1; padding-left: 7px; letter-spacing: .35px; }
.fit i { width: 18px; height: 21px; border-left: 1px solid #d8d8d8; display: flex; align-items: center; justify-content: center; fill: #555; }

.work { height: 593px; flex: none; display: flex; }
.data-pane { width: 210px; background: #fff; border-right: 1px solid #d0d0d0; border-top: 1px solid #d0d0d0; }
.pane-tabs { height: 26px; display: flex; align-items: center; font-size: 13px; }
.pane-tabs b { width: 77px; padding: 0 0 1px 18px; color: #000; font-weight: 600; }
.pane-tabs .an { width: 118px; height: 26px; line-height: 24px; padding-left: 12px; background: #fafafa; border-left: 1px solid #d0d0d0; border-bottom: 1px solid #d0d0d0; }
.pane-tabs svg { width: 14px; height: 26px; padding: 6px 6px 8px 0; background: #fafafa; border-bottom: 1px solid #d0d0d0; }
.source { height: 30px; border-bottom: 1px solid #dedede; display: flex; align-items: center; padding-left: 22px; color: #555; }
.source span { margin-left: 5px; letter-spacing: .15px; padding-bottom: 1px; }
.search-row { height: 39px; display: flex; align-items: center; padding-left: 8px; }
.search { width: 130px; height: 23px; border: 1px solid #bbb; border-radius: 2px; display: flex; align-items: center; padding: 0 5px 0 6px; color: #999; margin-right: 3px; }
.search span { flex: 1; letter-spacing: .15px; }
.data-pane h3 { height: 21px; line-height: 16px; padding-left: 18px; font-weight: 600; font-size: 13px; color: #000; letter-spacing: .1px; }
.fields li { height: 21px; display: flex; align-items: center; color: #3c7fa0; font-size: 12px; }
.fields li.g { color: #3ba67c; }
.fields li i { width: 26px; margin-left: 21px; }
.fields .ico svg { margin-left: 2px; }
.abc { font: bold 8.8px Inter, sans-serif; padding-top: 1px; }
.fields span, .fields em { color: #222; }
.fields em { letter-spacing: .38px; }
.measures { margin: 0 6px 0 15px; border-top: 1px solid #dcdcdc; padding-top: 1px; }
.measures li i { margin-left: 6px; }

.cards { width: 154px; margin-left: 6px; display: flex; flex-direction: column; gap: 6px; }
.card { border: 1px solid #d4d4d4; background: #fafafa; }
.card h4 { padding: 6px 0 0 6px; line-height: 18px; color: #444; }
.pages { height: 62px; } .filters { height: 101px; } .marks { height: 264px; }
.pill { height: 20px; border-radius: 10px; line-height: 20px; padding: 0 11px; color: #fff; font-size: 12px; font-weight: 550; white-space: nowrap; }
.blue { background: #4996b2; } .green { background: #00b180; }
.filters .pill { margin: 8px 4px 0; letter-spacing: -.1px; }
.filters .pill + .pill { margin-top: 3px; }
.mark-type { margin: 11px 6px 0; height: 21px; border: 1px solid #c4c4c4; border-radius: 1px; display: flex; align-items: center; padding-left: 12px; color: #555; background: #fff; }
.mark-type span { flex: 1; padding-left: 7px; letter-spacing: -.2px; }
.mark-type i { width: 18px; height: 19px; border-left: 1px solid #ddd; display: flex; align-items: center; justify-content: center; fill: #555; }
.mark-grid { margin: 6px 6px 9px; display: grid; grid-template-columns: 43px 42px 43px; column-gap: 6px; row-gap: 6px; }
.mark-grid div { height: 42px; border: 1px solid #d4d4d4; display: flex; flex-direction: column; align-items: center; padding-top: 6px; font-size: 11.5px; letter-spacing: -.1px; }
.mark-grid span { line-height: 16px; margin-top: 3px; }
.enc { display: flex; align-items: center; margin: 0 10px 3px 13px; justify-content: space-between; }
.enc .pill { width: 111px; padding: 0 0 0 10px; letter-spacing: .2px; }

.view { width: 984px; margin-left: 6px; display: flex; flex-direction: column; gap: 6px; }
.shelf { height: 28px; border: 1px solid #d4d4d4; background: #fafafa; }
.shelf div { width: 125px; height: 100%; border-right: 1px solid #d4d4d4; display: flex; align-items: center; padding-left: 6px; color: #444; }
.shelf span { margin-left: 7px; padding-bottom: 1px; }
.sheet { height: 519px; border: 1px solid #d4d4d4; background: #fff; }
.sheet h1 { font-size: 19.5px; letter-spacing: .75px; font-weight: 300; line-height: 30px; padding: 10px 0 0 10px; height: 93px; white-space: nowrap; color: #333; }
.labels { fill: #e9eff5; font-size: 12.6px; text-anchor: middle; font-weight: 300; }

.tabs { height: 31px; flex: none; border-top: 1px solid #c8c8c8; border-bottom: 1px solid #cfcfcf; display: flex; background: #e6e6e6; color: #666; font-size: 12px; }
.tabs div { border-left: 1px solid #c8c8c8; padding-left: 6px; display: flex; align-items: center; }
.tabs .t1 { width: 130px; border: 0; padding-left: 10px; } .t1 span { margin-left: 5px; }
.t1 svg { margin-bottom: 2px; }
.tabs .t2 { width: 178px; letter-spacing: -.04px; } .tabs .t3 { width: 161px; letter-spacing: -.14px; padding-left: 5px; } .tabs .t4 { width: 143px; letter-spacing: -.1px; padding-left: 5px; } .tabs .t5 { width: 200px; letter-spacing: -.18px; padding-left: 5px; }
.tabs .t6 { width: 200px; background: #fafafa; font-weight: 600; color: #555; padding-left: 5px; padding-bottom: 2px; letter-spacing: -.1px; }
.tabs .add { width: 32px; padding: 0; }
.status { height: 20px; flex: none; background: #ebebeb; display: flex; align-items: center; font-size: 11px; padding: 0 0 0 3px; color: #333; }
.status span { padding-bottom: 1px; }
.s1 { width: 57px; } .s2 { width: 107px; letter-spacing: -.3px; } .s3 { width: 832px; letter-spacing: .12px; }

.taskbar { height: 40px; flex: none; background: #1f1f1f; display: flex; align-items: center; color: #fff; }
.tb-search { width: 288px; height: 40px; background: #434343; border: 1px solid #686868; display: flex; align-items: center; padding-left: 11px; font-size: 15px; color: #ddd; }
.tb-search span { flex: 1; padding-left: 10px; letter-spacing: -.52px; }
.glyphs { fill: #fff; font-size: 11px; font-weight: 700; text-anchor: middle; }
.glyphs .thin { font-weight: 400; }
.temp { width: 42px; margin-left: 3px; font-size: 14px; letter-spacing: -.6px; }
.lang { width: 34px; margin-left: 3px; font-size: 12px; letter-spacing: -.4px; }
.clock { width: 59px; display: flex; flex-direction: column; align-items: center; font-size: 11.5px; line-height: 18px; letter-spacing: -.1px; padding-right: 2px; }
.notes text { fill: #fff; font-size: 12px; font-weight: 600; text-anchor: middle; }

.showme { position: absolute; left: 1158px; top: 48px; width: 204px; filter: drop-shadow(2px 2px 1.5px rgba(0,0,0,.3)); }
.showme-tab { margin-left: 93px; height: 37px; background: #fafafa; border: 1px solid #e0e0e0; border-bottom: 0; display: flex; align-items: center; padding: 0 0 6px 11px; font: 14px Roboto, sans-serif; color: #222; }
.showme-tab span { margin-left: 5px; letter-spacing: -.45px; padding-bottom: 1px; }
.showme-body { height: 555px; background: #fafafa; border: 1px solid #dcdcdc; border-top: 0; padding: 14px 0 0 13px; }
.thumbs { display: grid; grid-template-columns: repeat(3, 56px); gap: 4px; }
.thumbs svg { width: 56px; height: 42px; border: 1px solid #dedede; background: #fff; }
.thumbs .selected { border: 2px solid #d9683a; }
.nums { fill: #cfd4d1; font: 15px "Liberation Serif", serif; }
.showme p { padding-left: 2px; display: flex; align-items: center; height: 24px; color: #222; letter-spacing: -.35px; }
.showme .p1 { margin-top: 14px; display: block; line-height: 24px; white-space: nowrap; letter-spacing: -.22px; }
.p1 b { color: #000; }
.p2 span, .p3 span:first-child, .p4 span:first-child { margin-top: -2px; }
.p2 svg { margin: -5px 0 0 8px; }
.p3 .pill, .p4 .pill { margin: -4px 0 0 3px; letter-spacing: 0; }
.p3 .pill { margin-left: 2px; padding: 0 11px 0 10px; }
.p4 .pill { padding: 0 12px 0 10px; }
.showme .p4 { margin-top: 4px; letter-spacing: 0; }

.watermark { position: absolute; left: 1073px; top: 649px; display: flex; flex-direction: column; color: rgba(130,130,130,.55); }
.w1 { font-size: 18.5px; line-height: 25px; letter-spacing: .37px; } .w2 { font-size: 13.8px; line-height: 22px; letter-spacing: .3px; }
```
